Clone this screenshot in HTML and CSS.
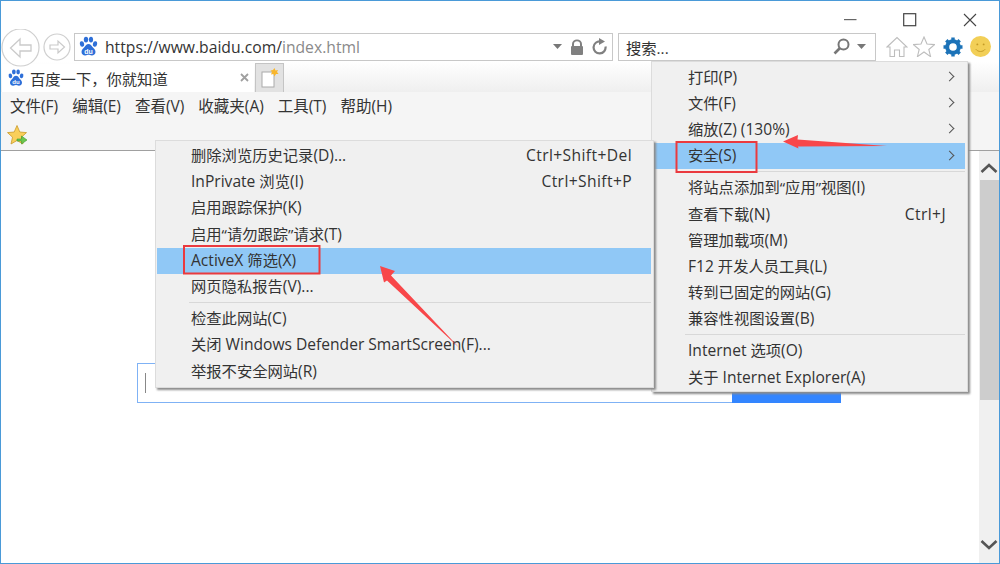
FILE: index.html
```html
<!DOCTYPE html>
<html lang="zh-CN">
<head>
<meta charset="utf-8">
<title>百度一下，你就知道</title>
<link rel="stylesheet" href="styles.css">
</head>
<body>
<div class="window">
  <svg width="0" height="0" class="defs"><defs>
    <g id="paw"><ellipse cx="4" cy="8" rx="2.1" ry="2.8" transform="rotate(-12 4 8)"/><ellipse cx="8" cy="3.6" rx="2.2" ry="2.9"/><ellipse cx="13" cy="3.6" rx="2.1" ry="2.9"/><ellipse cx="17" cy="8" rx="2.1" ry="2.8" transform="rotate(12 17 8)"/><path d="M10.5 8c-2 0-3 1.600-4 3-1 1.300-3 2.500-3 5 0 2.300 2 3.500 3.800 3.400 1.300 0 2.300-.6 3.200-.6s2 .6 3.300.6c1.800 0 3.700-1.100 3.700-3.400 0-2.500-2-3.700-3-5-1-1.400-2-3-4-3z"/><text x="10.500" y="18" class="du">du</text></g>
  </defs></svg>
  <div class="titlebar">
    <svg class="caption-min" width="14" height="3" viewBox="0 0 14 3"><rect y="1" width="12.500" height="1.200" fill="#666"/></svg>
    <svg class="caption-max" width="14" height="14" viewBox="0 0 14 14"><rect x=".7" y=".7" width="12" height="12" fill="none" stroke="#444" stroke-width="1.200"/></svg>
    <svg class="caption-close" width="14" height="14" viewBox="0 0 14 14"><path d="M1 1l12 12M13 1L1 13" stroke="#444" stroke-width="1.100"/></svg>
  </div>
  <div class="navbar">
    <svg class="nav-back" width="40" height="38" viewBox="0 0 40 38"><circle cx="19.500" cy="18.500" r="18.500" fill="#fff" stroke="#cfcfcf" stroke-width="1.200"/><path d="M30 16h-11v-6l-9.500 9 9.500 9v-6h11z" fill="#fff" stroke="#cacaca" stroke-width="1.300"/></svg>
    <svg class="nav-forward" width="28" height="28" viewBox="0 0 28 28"><circle cx="14" cy="14" r="13" fill="#fff" stroke="#cfcfcf" stroke-width="1.200"/><path d="M7 12h8V8l6.500 6-6.500 6v-4H7z" fill="#fff" stroke="#cacaca" stroke-width="1.200"/></svg>
    <div class="address">
      <svg class="paw" width="21" height="21" viewBox="0 0 21 21"><use href="#paw"/></svg>
      <span class="url"><b>https://www.baidu.com/</b>index.html</span>
      <svg class="caret" width="9" height="5" viewBox="0 0 9 5"><path d="M0 0h9L4.500 5z" fill="#777"/></svg>
      <svg class="lock" width="14" height="16" viewBox="0 0 14 16"><path d="M2 7V5a5 4.600 0 0 1 10 0v2h-2V5a3 2.800 0 0 0-6 0v2z" fill="#808080"/><rect x="1" y="7" width="12" height="9" rx="1" fill="#808080"/></svg>
      <svg class="refresh" width="16" height="17" viewBox="0 0 16 17"><path d="M9.500 3.500a6 6 0 1 0 5 5" fill="none" stroke="#808080" stroke-width="2.200"/><path d="M8 0l6 3.500-6 3.500z" fill="#808080"/></svg>
    </div>
    <div class="search">
      <span class="search-text">搜索...</span>
      <svg class="magnifier" width="17" height="17" viewBox="0 0 17 17"><circle cx="10.500" cy="6.500" r="5" fill="none" stroke="#777" stroke-width="2"/><path d="M7 10l-5.500 5.500" stroke="#777" stroke-width="2.600"/></svg>
      <svg class="caret" width="9" height="5" viewBox="0 0 9 5"><path d="M0 0h9L4.500 5z" fill="#777"/></svg>
    </div>
    <svg class="tool-home" width="22" height="22" viewBox="0 0 22 22"><path d="M1 11L11 1.500 21 11h-3v9.500h-4.500V14h-5v6.500H4V11z" fill="#fff" stroke="#bdbdbd" stroke-width="1.100"/></svg>
    <svg class="tool-star" width="22" height="21" viewBox="0 0 22 21"><path d="M11 1l3 7 7.500.6-5.700 4.900 1.800 7.200L11 16l-6.600 4.700 1.800-7.200L.5 8.600 8 8z" fill="#fff" stroke="#bdbdbd" stroke-width="1.100"/></svg>
    <svg class="tool-gear" width="20" height="20" viewBox="0 0 20 20"><circle cx="10" cy="10" r="5.800" fill="none" stroke="#1c73b8" stroke-width="4"/><path d="M10 .5v4M10 15.500v4M.5 10h4M15.500 10h4M3.300 3.300l2.800 2.800M13.900 13.900l2.800 2.800M16.700 3.300l-2.800 2.800M6.100 13.900l-2.800 2.800" stroke="#1c73b8" stroke-width="3.400"/></svg>
    <svg class="tool-smile" width="21" height="21" viewBox="0 0 20 20"><circle cx="10" cy="10" r="10" fill="#f2cf57"/><circle cx="7" cy="8" r=".9" fill="#c49a25"/><circle cx="13" cy="8" r=".9" fill="#c49a25"/><path d="M5.500 12.500c2 3 7 3 9 0" fill="none" stroke="#c49a25" stroke-width=".9"/></svg>
  </div>
  <div class="tabstrip">
    <div class="tab">
      <svg class="paw" width="18" height="18" viewBox="0 0 21 21"><use href="#paw"/></svg>
      <span class="tab-title">百度一下，你就知道</span>
      <svg class="tab-close" width="9" height="9" viewBox="0 0 9 9"><path d="M1 1l7 7M8 1L1 8" stroke="#a0a0a0" stroke-width="1.800"/></svg>
    </div>
    <div class="newtab">
      <svg width="18" height="20" viewBox="0 0 18 20"><rect x="1" y="4" width="12" height="15" fill="#fff" stroke="#aaa"/><path d="M13.500 0l1 2.500 2.500-.5-1 2 1.500 2-2.500 0-1.500 2.500-1-2.500-2.500.5 1-2.500-1.500-1.500 2.500-.5z" fill="#f8b62c"/></svg>
    </div>
  </div>
  <nav class="menubar">
    <span>文件(F)</span><span>编辑(E)</span><span>查看(V)</span><span>收藏夹(A)</span><span>工具(T)</span><span>帮助(H)</span>
  </nav>
  <div class="favbar">
    <svg width="21" height="22" viewBox="0 0 21 22"><path d="M10 .5l2.800 6.500 6.700.6-5 4.600 1.500 6.800-6-3.500-6 3.500 1.500-6.800-5-4.600 6.700-.6z" fill="#f9cf5a" stroke="#c99a2c" stroke-width=".8"/><path d="M10 14h4.500v-3l5.500 4-5.500 4v-3H10z" fill="#6cc74f" stroke="#3f9a2c" stroke-width=".6"/></svg>
  </div>
  <div class="content">
    <main class="page">
      <div class="baidu-search">
        <div class="baidu-input"><i class="cursor"></i></div>
        <div class="baidu-button"></div>
      </div>
    </main>
    <aside class="scrollbar">
      <svg class="chev" width="18" height="10" viewBox="0 0 18 10"><path d="M1.500 9L9 2l7.500 7" fill="none" stroke="#555" stroke-width="2.600"/></svg>
      <div class="thumb"></div>
      <div class="track"></div>
      <svg class="chev" width="18" height="10" viewBox="0 0 18 10"><path d="M1.500 1L9 8l7.500-7" fill="none" stroke="#555" stroke-width="2.600"/></svg>
    </aside>
  </div>

  <div class="menu menu-tools">
    <div class="row"><span>打印<span class="lat">(P)</span></span><i class="more"></i></div>
    <div class="row"><span>文件<span class="lat">(F)</span></span><i class="more"></i></div>
    <div class="row"><span>缩放<span class="lat">(Z) (130%)</span></span><i class="more"></i></div>
    <div class="row active"><span>安全<span class="lat">(S)</span></span><i class="more"></i></div>
    <div class="sep"></div>
    <div class="row"><span>将站点添加到“应用”视图<span class="lat">(I)</span></span></div>
    <div class="row"><span>查看下载<span class="lat">(N)</span></span><span class="key">Ctrl+J</span></div>
    <div class="row"><span>管理加载项<span class="lat">(M)</span></span></div>
    <div class="row"><span><span class="lat">F12</span> 开发人员工具<span class="lat">(L)</span></span></div>
    <div class="row"><span>转到已固定的网站<span class="lat">(G)</span></span></div>
    <div class="row"><span>兼容性视图设置<span class="lat">(B)</span></span></div>
    <div class="sep"></div>
    <div class="row"><span><span class="lat">Internet</span> 选项<span class="lat">(O)</span></span></div>
    <div class="row"><span>关于 <span class="lat">Internet Explorer(A)</span></span></div>
  </div>
  <div class="menu menu-safety">
    <div class="row"><span>删除浏览历史记录<span class="lat">(D)...</span></span><span class="key">Ctrl+Shift+Del</span></div>
    <div class="row"><span><span class="lat">InPrivate</span> 浏览<span class="lat">(I)</span></span><span class="key">Ctrl+Shift+P</span></div>
    <div class="row"><span>启用跟踪保护<span class="lat">(K)</span></span></div>
    <div class="row"><span>启用“请勿跟踪”请求<span class="lat">(T)</span></span></div>
    <div class="row active"><span><span class="lat">ActiveX</span> 筛选<span class="lat">(X)</span></span></div>
    <div class="row"><span>网页隐私报告<span class="lat">(V)...</span></span></div>
    <div class="sep"></div>
    <div class="row"><span>检查此网站<span class="lat">(C)</span></span></div>
    <div class="row"><span>关闭 <span class="lat">Windows Defender SmartScreen(F)...</span></span></div>
    <div class="row"><span>举报不安全网站<span class="lat">(R)</span></span></div>
  </div>

  <svg class="annotations" width="1000" height="564" viewBox="0 0 1000 564">
    <rect x="676.500" y="142" width="80" height="30" fill="none" stroke="#ea3a3f" stroke-width="2"/>
    <rect x="184" y="246" width="135.500" height="27.500" fill="none" stroke="#ea3a3f" stroke-width="2"/>
    <path d="M783 141.500L798 135l-.5 4.500 89.500 6.500-89 .5.500 2z" fill="#f8474a"/>
    <path d="M380 266l15 5-4 4.500 69 73-73-68-3 2z" fill="#f8474a"/>
  </svg>
</div>
</body>
</html>
```
FILE: styles.css
```css
* { box-sizing: border-box; }
html, body { margin: 0; padding: 0; }
body { width: 1000px; height: 564px; overflow: hidden; background: #fff; }
.defs { position: absolute; }
.du { font: bold 7px "Liberation Sans", sans-serif; fill: #fff; text-anchor: middle; }
.window {
  position: relative; width: 1000px; height: 564px;
  display: flex; flex-direction: column;
  border: 1px solid #4a9ad8;
  font: 15.3px "Open Sans", "Noto Sans CJK SC", sans-serif;
  color: #333;
}
.titlebar { height: 31px; display: flex; justify-content: flex-end; padding-right: 22px; flex: none; }
.caption-min { margin: 17px 45px 0 0; }
.caption-max { margin: 12px 46px 0 0; }
.caption-close { margin: 12px 0 0 0; }
.navbar { height: 29px; position: relative; display: flex; align-items: center; flex: none; }
.nav-back { margin: 2px 0 0 0; flex: none; }
.nav-forward { margin: 1px 0 0 2px; flex: none; position: relative; }
.address {
  width: 539px; height: 28px; margin-left: 3px; flex: none;
  border: 1px solid #c8c8c8; display: flex; align-items: center; background: #fff;
  padding: 0 5px 0 3px;
}
.paw { fill: #2e6fd8; flex: none; }
.url { margin-left: 6px; flex: 1; color: #8a8a8a; white-space: nowrap; font-size: 15.7px; }
.url b { font-weight: 400; color: #333; }
.address .caret { margin-right: 8px; }
.lock { margin-right: 7px; }
.search {
  width: 258px; height: 28px; margin-left: 5px; flex: none;
  border: 1px solid #c8c8c8; display: flex; align-items: center; padding: 0 9px 0 7px; background: #fff;
}
.search-text { flex: 1; }
.magnifier { margin-right: 7px; }
.tool-home { margin-left: 10px; flex: none; }
.tool-star { margin-left: 5px; flex: none; }
.tool-gear { margin-left: 8px; flex: none; }
.tool-smile { margin-left: 7px; flex: none; }
.tabstrip {
  height: 31px; flex: none; display: flex; align-items: flex-end; padding-left: 1px;
  background: linear-gradient(#fff, #efefef);
}
.tab {
  width: 252px; height: 28px; background: #fff; display: flex; align-items: center; padding: 0 5px 1px 5px;
}
.tab-title { margin-left: 5px; flex: 1; white-space: nowrap; }
.newtab {
  width: 29px; height: 29px; background: #e2e2e2; border: 1px solid #c4c4c4; border-bottom: 0;
  display: flex; align-items: center; justify-content: center; margin-left: 1px;
}
.menubar {
  height: 30px; flex: none; background: #f5f5f5; display: flex; gap: 14px; align-items: center; padding: 0 0 3px 9px;
  white-space: nowrap; font-size: 15.5px;
}
.favbar { height: 29px; flex: none; background: #f5f5f5; border-bottom: 1px solid #a0a0a0; padding: 3px 0 0 6px; }
.content { flex: 1; display: flex; min-height: 0; }
.page { flex: 1; background: #fff; padding: 212px 0 0 136px; }
.baidu-search { display: flex; height: 40px; width: 704px; }
.baidu-input { width: 595px; border: 1px solid #7fb2f5; border-right: 0; padding: 9px 0 0 7px; }
.cursor { display: block; width: 1px; height: 20px; background: #888; }
.baidu-button { width: 109px; background: #3385ff; }
.scrollbar { width: 20px; flex: none; background: #f0f0f0; display: flex; flex-direction: column; align-items: center; }
.chev { flex: none; margin: 12px 0 7px; }
.scrollbar .chev:last-child { margin: 0 0 13px; }
.thumb { width: 19px; height: 220px; background: #cdcdcd; flex: none; }
.track { flex: 1; }
.menu {
  position: absolute; background: #f0f0f0; border: 1px solid #dcdcdc;
  box-shadow: 2px 2px 2px #8c8c8c; padding: 2px 2px 2px 1px; white-space: nowrap;
  line-height: 20px;
}
.menu-tools { left: 650px; top: 60px; width: 317px; height: 331px; padding-top: 2.5px; }
.menu-safety { left: 154px; top: 139px; width: 499px; height: 248px; }
.row { height: 26.2px; display: flex; align-items: center; justify-content: space-between; padding: 0 12px 2px 35px; }
.row.active { background: #90c8f6; }
.lat { font-size: 15.6px; }
.key { font-size: 15.6px; letter-spacing: .4px; margin-right: 7px; }
.menu-safety .row { padding-left: 34px; padding-right: 19px; }
.menu-safety .key { margin-right: 0; }
.more { width: 7px; height: 7px; border-top: 1.300px solid #555; border-right: 1.300px solid #555; transform: rotate(45deg); }
.sep { height: 6px; margin-left: 32px; position: relative; }
.sep::after { content: ""; position: absolute; left: 0; right: 0; top: 2px; height: 1px; background: #d8d8d8; }
.annotations { position: absolute; left: -1px; top: -1px; pointer-events: none; }
```
